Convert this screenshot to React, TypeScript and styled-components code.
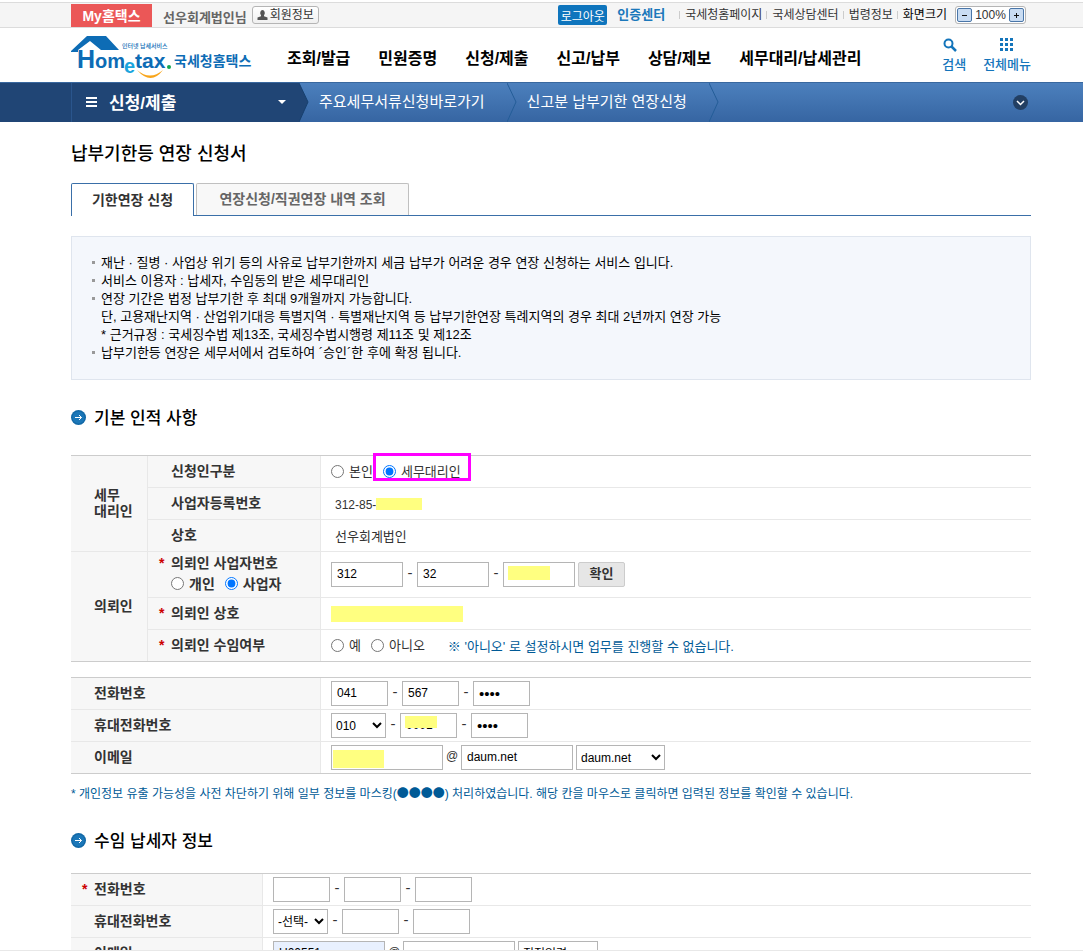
import React from "react";
import styled, { createGlobalStyle } from "styled-components";

const GlobalStyle = createGlobalStyle`
  * { box-sizing: border-box; }
  body {
    margin: 0;
    background: #fff;
    color: #333;
    font: 400 13px/18px "Liberation Sans", "Noto Sans CJK KR", sans-serif;
  }
  button, input, select { font-family: inherit; margin: 0; }
  a { color: inherit; text-decoration: none; }
  h1, h2, ul, p { margin: 0; padding: 0; list-style: none; }
`;

const Page = styled.div`
  height: 100vh;
  overflow: hidden;
  border-bottom: 1px solid #e8e8e8;
`;

const gutter = "padding-left: 71px; padding-right: 52px;";

/* top utility strip */
const TopStrip = styled.div`
  ${gutter}
  display: flex;
  align-items: center;
  height: 26px;
  margin-top: 2px;
  background: #f5f5f5;
  border-top: 1px solid #dcdcdc;
  border-bottom: 1px solid #dcdcdc;
  font-size: 12px;
  white-space: nowrap;
`;
const MyTab = styled.a`
  align-self: stretch;
  width: 81px;
  margin-top: 1px;
  background: #eb5757;
  color: #fff;
  font-size: 14px;
  font-weight: 700;
  line-height: 24px;
  text-align: center;
`;
const UserName = styled.span`
  margin: 6px 5px 0 11px;
  color: #666;
  font-size: 13px;
  font-weight: 700;
  line-height: 18px;
`;
const MemberButton = styled.button`
  display: flex;
  align-items: center;
  gap: 2px;
  height: 18px;
  padding: 0 4px;
  border: 1px solid #b5b5b5;
  border-radius: 3px;
  background: linear-gradient(#fff, #f0f0f0);
  color: #333;
  font-size: 12px;
  line-height: 16px;
`;
const Utilities = styled.nav`
  display: flex;
  align-items: center;
  margin-left: auto;
  margin-right: 5px;
  color: #333;
`;
const Logout = styled.button`
  height: 20px;
  width: 49px;
  padding: 0;
  border: 0;
  border-radius: 2px;
  background: #0f75bd;
  color: #fff;
  font-size: 12px;
`;
const CertLink = styled.a`
  margin: 0 14px 0 10px;
  color: #1b78bb;
  font-size: 13px;
  font-weight: 700;
  line-height: 20px;
`;
const UtilLink = styled.a<{ $dark?: boolean }>`
  display: flex;
  align-items: center;
  padding-right: 4px;
  line-height: 20px;
  color: ${(p) => (p.$dark ? "#000" : "#333")};
  &::before {
    content: "";
    width: 1px;
    height: 8px;
    margin-right: 5px;
    background: #ccc;
  }
`;
const ZoomBox = styled.div`
  display: flex;
  align-items: center;
  justify-content: space-between;
  width: 71px;
  height: 18px;
  margin-left: 4px;
  padding: 0 1px;
  border: 1px solid #b5b5b5;
  border-radius: 3px;
  background: #fff;
  font-size: 12px;
`;
const ZoomButton = styled.button`
  display: flex;
  align-items: center;
  justify-content: center;
  width: 15px;
  height: 14px;
  padding: 0;
  border: 1px solid #4a76a8;
  border-radius: 2px;
  background: #c9dcf2;
`;

/* logo row */
const Header = styled.header`
  ${gutter}
  display: flex;
  align-items: center;
  height: 54px;
`;
const LogoLink = styled.a`
  display: block;
  width: 182px;
  height: 46px;
`;
const MainNav = styled.nav`
  display: flex;
  gap: 28px;
  margin: 7px 0 0 34px;
  color: #000;
  font-size: 16px;
  font-weight: 700;
  line-height: 24px;
  white-space: nowrap;
`;
const Tools = styled.div`
  display: flex;
  gap: 17px;
  margin-left: auto;
`;
const Tool = styled.button`
  display: flex;
  flex-direction: column;
  align-items: center;
  gap: 4px;
  padding: 2px 0 0;
  border: 0;
  background: none;
  color: #1475bb;
  font-size: 13px;
  font-weight: 500;
  line-height: 18px;
  white-space: nowrap;
  svg { margin-right: 8px; }
  &:last-child svg { margin-right: 0; }
`;

/* blue breadcrumb bar */
const CrumbBar = styled.div`
  display: flex;
  align-items: center;
  height: 40px;
  padding-right: 55px;
  background: linear-gradient(#4c80bd, #3665a2);
  border-top: 1px solid #39689f;
  color: #fff;
  white-space: nowrap;
`;
const CrumbRoot = styled.div`
  width: 299px;
  height: 39px;
  padding-left: 71px;
  background: #204575;
`;
const CrumbMenu = styled.button`
  display: flex;
  align-items: center;
  width: 100%;
  height: 39px;
  padding: 0 13px 2px 14px;
  border: 0;
  border-left: 1px solid #2a558c;
  background: none;
  color: #fff;
  font-size: 17px;
  font-weight: 700;
  svg:first-child { margin-right: 12px; }
  svg:last-child { margin-left: auto; }
`;
const CrumbLink = styled.a`
  padding: 0 22px 2px 10px;
  font-size: 15px;
`;
const CrumbToggle = styled.button`
  display: flex;
  margin-left: auto;
  padding: 0;
  border: 0;
  background: none;
`;

/* body */
const Main = styled.main`
  ${gutter}
`;
const Title = styled.h1`
  padding-top: 19px;
  color: #000;
  font-size: 18px;
  font-weight: 500;
  line-height: 26px;
`;
const Tabs = styled.div`
  display: flex;
  gap: 2px;
  margin-top: 16px;
  border-bottom: 1px solid #3a6fa8;
`;
const Tab = styled.button<{ $active?: boolean }>`
  min-width: ${(p) => (p.$active ? 123 : 213)}px;
  height: ${(p) => (p.$active ? 33 : 32)}px;
  margin-bottom: ${(p) => (p.$active ? -1 : 0)}px;
  padding: 0 19px 3px;
  border: 1px solid ${(p) => (p.$active ? "#3a6fa8" : "#c0c0c0")};
  border-bottom: 0;
  border-radius: 2px 2px 0 0;
  background: ${(p) => (p.$active ? "#fff" : "#f8f8f8")};
  color: ${(p) => (p.$active ? "#333" : "#666")};
  font-size: 14px;
  font-weight: 700;
`;
const Guide = styled.ul`
  margin-top: 20px;
  padding: 17px 20px;
  border: 1px solid #dfe5ee;
  background: #f4f7fc;
  color: #000;
`;
const GuideItem = styled.li`
  display: flex;
  &::before {
    content: "";
    flex: none;
    width: 3px;
    height: 3px;
    margin: 7px 6px 0 0;
    background: #999;
  }
`;
const SectionHead = styled.h2<{ $gap: number }>`
  display: flex;
  align-items: center;
  gap: 8px;
  margin: 25px 0 ${(p) => p.$gap}px;
  color: #000;
  font-size: 17px;
  font-weight: 500;
  line-height: 24px;
  span { padding-top: 2px; margin-bottom: -2px; }
`;

const FormTable = styled.table<{ $spaced?: boolean }>`
  width: 100%;
  margin-top: ${(p) => (p.$spaced ? 15 : 0)}px;
  border-collapse: separate;
  border-spacing: 0;
  border-top: 1px solid #ccc;
  border-bottom: 1px solid #ccc;
  table-layout: fixed;
  tr:last-child > *, [data-end] { border-bottom: 0; height: 31px; }
`;
const Th = styled.th<{ $tall?: boolean; $bare?: boolean }>`
  height: ${(p) => (p.$tall ? 46 : 32)}px;
  padding: 0 0 ${(p) => (p.$tall ? 3 : 1)}px ${(p) => (p.$bare ? 23 : 0)}px;
  border-right: 1px solid #e8e8e8;
  border-bottom: 1px solid #e8e8e8;
  background: #f7f7f7;
  color: #333;
  font-size: 14px;
  font-weight: 700;
  line-height: 16px;
  text-align: left;
`;
const Td = styled.td`
  padding: 0 0 0 10px;
  border-bottom: 1px solid #e8e8e8;
`;
const HeadLabel = styled.div`
  display: flex;
  align-items: center;
`;
const Mark = styled.span`
  width: 23px;
  padding-left: 11px;
  color: #c00;
`;
const Fields = styled.div`
  display: flex;
  align-items: center;
`;
const Choices = styled.div<{ $inset?: boolean }>`
  display: flex;
  align-items: center;
  gap: 10px;
  padding-left: ${(p) => (p.$inset ? 23 : 0)}px;
  margin-top: ${(p) => (p.$inset ? 5 : 0)}px;
`;
const ChoiceLabel = styled.label`
  position: relative;
  display: flex;
  align-items: center;
  gap: 5px;
`;
const Radio = styled.input`
  width: 13px;
  height: 13px;
`;
const Highlight = styled.span`
  position: absolute;
  inset: -10px -10px 0;
  border: 3px solid #f0f;
`;
const Value = styled.span<{ $digits?: boolean }>`
  display: inline-block;
  padding: 3px 0 0 4px;
  font-size: ${(p) => (p.$digits ? 12 : 13)}px;
`;
const Cover = styled.span<{ $w: number; $h: number }>`
  display: inline-block;
  width: ${(p) => p.$w}px;
  height: ${(p) => p.$h}px;
  background: #ffff80;
  vertical-align: middle;
`;
const Covered = styled.span<{ $pad: string }>`
  position: relative;
  display: flex;
  ${Cover} {
    position: absolute;
    inset: ${(p) => p.$pad};
  }
`;
const Box = styled.input<{ $w: number; $filled?: boolean }>`
  width: ${(p) => p.$w}px;
  height: 25px;
  padding: 0 5px 1px;
  border: 1px solid #b5b5b5;
  border-radius: 0;
  background: ${(p) => (p.$filled ? "#e8f0fe" : "#fff")};
  color: #000;
  font-size: ${(p) => (p.type === "password" ? 15 : 12)}px;
`;
const Pick = styled.select<{ $w: number }>`
  width: ${(p) => p.$w}px;
  height: 25px;
  padding: 0;
  border: 1px solid #b5b5b5;
  border-radius: 0;
  background: #fff;
  color: #000;
  font-size: 12px;
`;
const Between = styled.span<{ $w?: number }>`
  width: ${(p) => p.$w || 14}px;
  padding-bottom: 3px;
  text-align: center;
  font-size: ${(p) => (p.$w ? 12 : 15)}px;
`;
const Confirm = styled.button`
  width: 47px;
  height: 25px;
  margin-left: 3px;
  padding: 0 0 4px;
  border: 1px solid #ccc;
  border-radius: 2px;
  background: #e6e6e6;
  color: #333;
  font-size: 13px;
  font-weight: 700;
`;
const Hint = styled.span`
  margin-left: 13px;
  padding-top: 2px;
  color: #005a96;
`;
const MaskNote = styled.p`
  margin-top: 10px;
  color: #005a96;
  font-size: 12px;
  white-space: nowrap;
`;
const WideDots = styled.span`
  font-family: "Noto Sans CJK KR", sans-serif;
`;

const Logo = () => (
  <svg width="182" height="46" viewBox="0 0 182 46" role="img" aria-label="Hometax">
    <path d="M0 19 L16 4 H35 L48 18 H30 L19 9 L7 18 V20 H0Z" fill="#0d6cb5" />
    <g fontFamily='"Liberation Sans", sans-serif' fontWeight="700" fill="#0d6cb5">
      <text x="6" y="36" fontSize="25">H</text>
      <text x="24" y="36" fontSize="20">om</text>
      <text x="53" y="41" fontSize="20" fill="#1ba5dd">e</text>
      <text x="64" y="36" fontSize="21">tax</text>
    </g>
    <circle cx="98" cy="35" r="2" fill="#12a650" />
    <path d="M66 38 Q79 49 92 38 Q80 54 66 38Z" fill="#f8a51b" />
    <g fontFamily='"Noto Sans CJK KR", sans-serif' fill="#0d6cb5">
      <text x="51" y="16" fontSize="6" fontWeight="500">인터넷 납세서비스</text>
      <text x="103" y="34" fontSize="14" fontWeight="700">국세청홈택스</text>
    </g>
  </svg>
);

const Chevron = ({ root }: { root?: boolean }) => (
  <svg width="10" height="39" viewBox="0 0 10 39" aria-hidden="true">
    <path d="M0 0 L9 19 L0 39" fill={root ? "#204575" : "none"} stroke={root ? "#17406f" : "#245d98"} />
  </svg>
);

const SectionIcon = () => (
  <svg width="15" height="15" viewBox="0 0 15 15" aria-hidden="true">
    <circle cx="7.5" cy="7.5" r="7.5" fill="#1268a6" />
    <circle cx="7.5" cy="7.5" r="6" fill="#1b77b8" />
    <path d="M4 7.5 H10.5 M8 5 L10.5 7.5 L8 10" fill="none" stroke="#fff" />
  </svg>
);

const Section = ({ gap, children }: { gap: number; children: React.ReactNode }) => (
  <SectionHead $gap={gap}><SectionIcon /><span>{children}</span></SectionHead>
);

const Label = ({ required, children }: { required?: boolean; children: React.ReactNode }) => (
  <HeadLabel><Mark>{required ? "*" : ""}</Mark>{children}</HeadLabel>
);

const Choice = ({ name, label, on, marked }: { name: string; label: string; on?: boolean; marked?: boolean }) => (
  <ChoiceLabel>
    <Radio type="radio" name={name} defaultChecked={on} />
    {label}
    {marked && <Highlight />}
  </ChoiceLabel>
);

const nav = ["조회/발급", "민원증명", "신청/제출", "신고/납부", "상담/제보", "세무대리/납세관리"];
const dots = [0, 5, 10];

export default function App() {
  return (
    <Page>
      <GlobalStyle />
      <TopStrip>
        <MyTab href="#my">My홈택스</MyTab>
        <UserName>선우회계법인님</UserName>
        <MemberButton type="button">
          <svg width="11" height="12" viewBox="0 0 11 12" aria-hidden="true">
            <path d="M5.5 1a2.5 3 0 0 1 1.5 5.2v1l3.5 1.3V11H.5V8.500L4 7.200v-1A2.500 3 0 0 1 5.500 1Z" fill="#555" />
          </svg>
          회원정보
        </MemberButton>
        <Utilities>
          <Logout type="button">로그아웃</Logout>
          <CertLink href="#cert">인증센터</CertLink>
          <UtilLink href="#nts">국세청홈페이지</UtilLink>
          <UtilLink href="#call">국세상담센터</UtilLink>
          <UtilLink href="#law">법령정보</UtilLink>
          <UtilLink href="#size" $dark>화면크기</UtilLink>
          <ZoomBox>
            <ZoomButton type="button" aria-label="축소">
              <svg width="7" height="7" viewBox="0 0 7 7"><path d="M1 3.500H6" stroke="#111" /></svg>
            </ZoomButton>
            100%
            <ZoomButton type="button" aria-label="확대">
              <svg width="7" height="7" viewBox="0 0 7 7"><path d="M1 3.500H6M3.500 1V6" stroke="#111" /></svg>
            </ZoomButton>
          </ZoomBox>
        </Utilities>
      </TopStrip>

      <Header>
        <LogoLink href="#home"><Logo /></LogoLink>
        <MainNav>{nav.map((n) => <a key={n} href="#menu">{n}</a>)}</MainNav>
        <Tools>
          <Tool type="button">
            <svg width="14" height="14" viewBox="0 0 14 14" aria-hidden="true">
              <circle cx="5.500" cy="5.500" r="4" fill="none" stroke="#1475bb" strokeWidth="2" />
              <path d="M8.500 8.500 L13 13" stroke="#1475bb" strokeWidth="2.500" />
            </svg>
            검색
          </Tool>
          <Tool type="button">
            <svg width="14" height="14" viewBox="0 0 14 14" aria-hidden="true">
              {dots.map((y) => dots.map((x) => <rect key={`${x}-${y}`} x={x} y={y} width="3" height="3" fill="#1475bb" />))}
            </svg>
            전체메뉴
          </Tool>
        </Tools>
      </Header>

      <CrumbBar>
        <CrumbRoot>
          <CrumbMenu type="button">
            <svg width="11" height="10" viewBox="0 0 11 10" aria-hidden="true">
              <path d="M0 1H11M0 5H11M0 9H11" stroke="#fff" strokeWidth="2" />
            </svg>
            신청/제출
            <svg width="8" height="4" viewBox="0 0 8 4" aria-hidden="true"><path d="M0 0H8L4 4Z" fill="#fff" /></svg>
          </CrumbMenu>
        </CrumbRoot>
        <Chevron root />
        <CrumbLink href="#docs">주요세무서류신청바로가기</CrumbLink>
        <Chevron />
        <CrumbLink href="#extend">신고분 납부기한 연장신청</CrumbLink>
        <Chevron />
        <CrumbToggle type="button" aria-label="펼치기">
          <svg width="15" height="15" viewBox="0 0 15 15">
            <circle cx="7.500" cy="7.500" r="7.500" fill="#223f63" />
            <path d="M4 6 L7.500 9.500 L11 6" fill="none" stroke="#fff" strokeWidth="1.500" />
          </svg>
        </CrumbToggle>
      </CrumbBar>

      <Main>
        <Title>납부기한등 연장 신청서</Title>
        <Tabs role="tablist">
          <Tab type="button" role="tab" aria-selected="true" $active>기한연장 신청</Tab>
          <Tab type="button" role="tab" aria-selected="false">연장신청/직권연장 내역 조회</Tab>
        </Tabs>
        <Guide>
          <GuideItem>재난 · 질병 · 사업상 위기 등의 사유로 납부기한까지 세금 납부가 어려운 경우 연장 신청하는 서비스 입니다.</GuideItem>
          <GuideItem>서비스 이용자 : 납세자, 수임동의 받은 세무대리인</GuideItem>
          <GuideItem>
            <div>
              연장 기간은 법정 납부기한 후 최대 9개월까지 가능합니다.<br />
              단, 고용재난지역 · 산업위기대응 특별지역 · 특별재난지역 등 납부기한연장 특례지역의 경우 최대 2년까지 연장 가능<br />
              * 근거규정 : 국세징수법 제13조, 국세징수법시행령 제11조 및 제12조
            </div>
          </GuideItem>
          <GuideItem>납부기한등 연장은 세무서에서 검토하여 ´승인´한 후에 확정 됩니다.</GuideItem>
        </Guide>

        <Section gap={26}>기본 인적 사항</Section>
        <FormTable>
          <colgroup><col width="77" /><col width="173" /><col /></colgroup>
          <tbody>
            <tr>
              <Th rowSpan={3} $bare>세무<br />대리인</Th>
              <Th><Label>신청인구분</Label></Th>
              <Td>
                <Choices>
                  <Choice name="applicant" label="본인" />
                  <Choice name="applicant" label="세무대리인" on marked />
                </Choices>
              </Td>
            </tr>
            <tr>
              <Th><Label>사업자등록번호</Label></Th>
              <Td><Fields><Value $digits>312-85-</Value><Cover $w={46} $h={12} /></Fields></Td>
            </tr>
            <tr>
              <Th><Label>상호</Label></Th>
              <Td><Value>선우회계법인</Value></Td>
            </tr>
            <tr>
              <Th rowSpan={3} $bare data-end>의뢰인</Th>
              <Th $tall>
                <Label required>의뢰인 사업자번호</Label>
                <Choices $inset>
                  <Choice name="kind" label="개인" />
                  <Choice name="kind" label="사업자" on />
                </Choices>
              </Th>
              <Td>
                <Fields>
                  <Box $w={72} aria-label="사업자번호 1" defaultValue="312" />
                  <Between>-</Between>
                  <Box $w={72} aria-label="사업자번호 2" defaultValue="32" />
                  <Between>-</Between>
                  <Covered $pad="4px auto auto 5px">
                    <Box $w={72} aria-label="사업자번호 3" />
                    <Cover $w={42} $h={14} />
                  </Covered>
                  <Confirm type="button">확인</Confirm>
                </Fields>
              </Td>
            </tr>
            <tr>
              <Th><Label required>의뢰인 상호</Label></Th>
              <Td><Cover $w={132} $h={16} /></Td>
            </tr>
            <tr>
              <Th><Label required>의뢰인 수임여부</Label></Th>
              <Td>
                <Choices>
                  <Choice name="consent" label="예" />
                  <Choice name="consent" label="아니오" />
                  <Hint>※ '아니오' 로 설정하시면 업무를 진행할 수 없습니다.</Hint>
                </Choices>
              </Td>
            </tr>
          </tbody>
        </FormTable>

        <FormTable $spaced>
          <colgroup><col width="250" /><col /></colgroup>
          <tbody>
            <tr>
              <Th><Label>전화번호</Label></Th>
              <Td>
                <Fields>
                  <Box $w={57} aria-label="전화번호 1" defaultValue="041" />
                  <Between>-</Between>
                  <Box $w={57} aria-label="전화번호 2" defaultValue="567" />
                  <Between>-</Between>
                  <Box $w={57} type="password" aria-label="전화번호 3" defaultValue="0000" />
                </Fields>
              </Td>
            </tr>
            <tr>
              <Th><Label>휴대전화번호</Label></Th>
              <Td>
                <Fields>
                  <Pick $w={55} aria-label="휴대전화번호 1"><option>010</option></Pick>
                  <Between>-</Between>
                  <Covered $pad="3px auto auto 5px">
                    <Box $w={57} aria-label="휴대전화번호 2" defaultValue="0001" />
                    <Cover $w={32} $h={12} />
                  </Covered>
                  <Between>-</Between>
                  <Box $w={57} type="password" aria-label="휴대전화번호 3" defaultValue="0000" />
                </Fields>
              </Td>
            </tr>
            <tr>
              <Th><Label>이메일</Label></Th>
              <Td>
                <Fields>
                  <Covered $pad="5px auto auto 2px">
                    <Box $w={112} aria-label="이메일 아이디" />
                    <Cover $w={51} $h={18} />
                  </Covered>
                  <Between $w={18}>@</Between>
                  <Box $w={112} aria-label="이메일 도메인" defaultValue="daum.net" />
                  <Between $w={3} />
                  <Pick $w={89} aria-label="도메인 선택"><option>daum.net</option></Pick>
                </Fields>
              </Td>
            </tr>
          </tbody>
        </FormTable>
        <MaskNote>* 개인정보 유출 가능성을 사전 차단하기 위해 일부 정보를 마스킹(<WideDots>●●●●</WideDots>) 처리하였습니다. 해당 칸을 마우스로 클릭하면 입력된 정보를 확인할 수 있습니다.</MaskNote>

        <Section gap={21}>수임 납세자 정보</Section>
        <FormTable>
          <colgroup><col width="192" /><col /></colgroup>
          <tbody>
            <tr>
              <Th><Label required>전화번호</Label></Th>
              <Td>
                <Fields>
                  <Box $w={57} aria-label="납세자 전화번호 1" />
                  <Between>-</Between>
                  <Box $w={57} aria-label="납세자 전화번호 2" />
                  <Between>-</Between>
                  <Box $w={57} aria-label="납세자 전화번호 3" />
                </Fields>
              </Td>
            </tr>
            <tr>
              <Th><Label>휴대전화번호</Label></Th>
              <Td>
                <Fields>
                  <Pick $w={55} aria-label="납세자 휴대전화번호 1"><option>-선택-</option></Pick>
                  <Between>-</Between>
                  <Box $w={57} aria-label="납세자 휴대전화번호 2" />
                  <Between>-</Between>
                  <Box $w={57} aria-label="납세자 휴대전화번호 3" />
                </Fields>
              </Td>
            </tr>
            <tr>
              <Th><Label>이메일</Label></Th>
              <Td>
                <Fields>
                  <Box $w={112} $filled aria-label="납세자 이메일 아이디" defaultValue="U00551" />
                  <Between $w={18}>@</Between>
                  <Box $w={112} aria-label="납세자 이메일 도메인" />
                  <Between $w={3} />
                  <Pick $w={80} aria-label="납세자 도메인 선택"><option>직접입력</option></Pick>
                </Fields>
              </Td>
            </tr>
          </tbody>
        </FormTable>
      </Main>
    </Page>
  );
}
